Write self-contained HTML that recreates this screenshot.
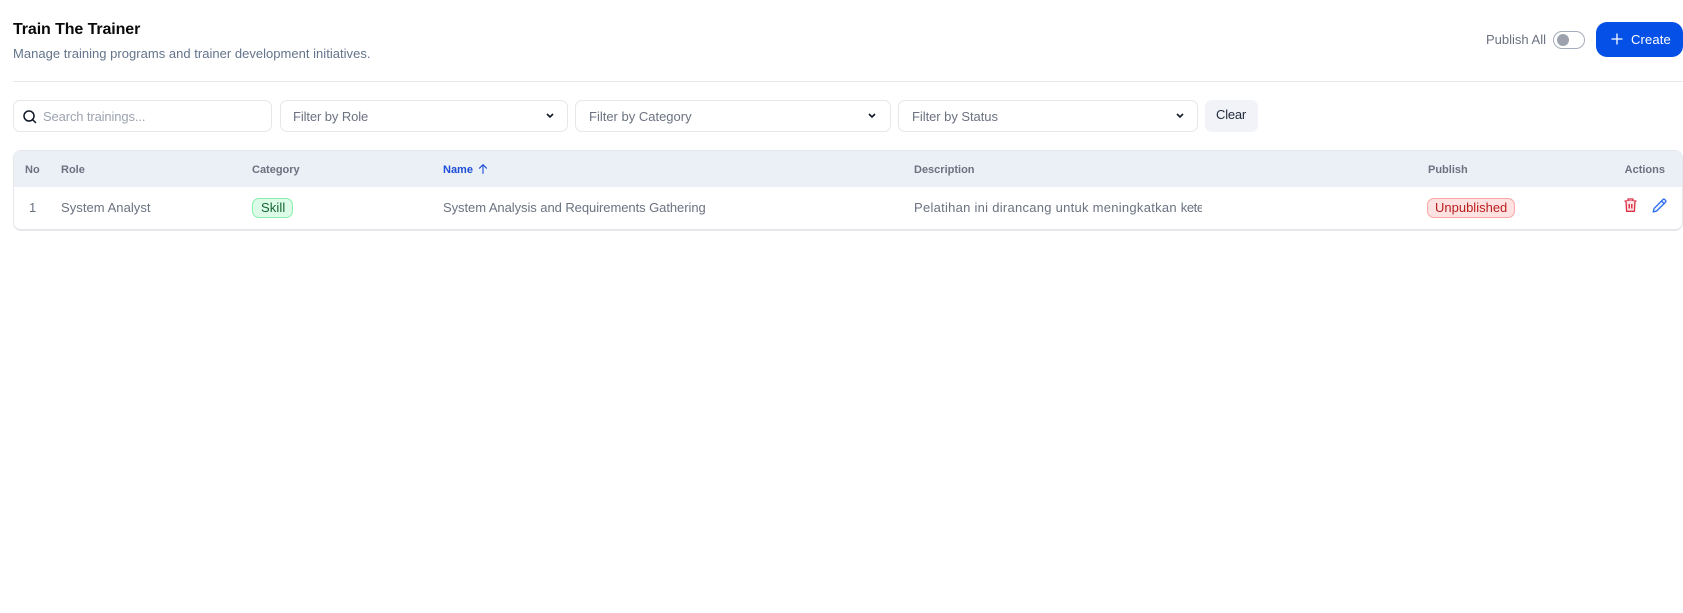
<!DOCTYPE html>
<html>
<head>
<meta charset="utf-8">
<style>
html,body{margin:0;padding:0;background:#fff;width:1683px;height:613px;overflow:hidden;font-family:"Liberation Sans",sans-serif}
.a{position:absolute;white-space:nowrap;line-height:20px}
.box{position:absolute;box-sizing:border-box;background:#fff;border:1px solid #e5e7eb;border-radius:7px;height:32px;top:100px}
.ph{font-size:13px;color:#6b7280;letter-spacing:-.05px;top:107px}
.th{font-size:11px;font-weight:bold;color:#6b7280;top:160px;letter-spacing:0}
.td{font-size:13px;color:#6b7280;top:198px;letter-spacing:.05px}
svg{position:absolute;display:block}
</style>
</head>
<body>
<div class="a" style="left:13px;top:20px;font-size:16px;font-weight:bold;color:#0a0a0a;letter-spacing:-.1px">Train The Trainer</div>
<div class="a" style="left:13px;top:44px;font-size:13px;color:#64748b;letter-spacing:.02px">Manage training programs and trainer development initiatives.</div>

<div class="a" style="left:1486px;top:30px;font-size:13px;color:#6b7280;letter-spacing:0">Publish All</div>
<div style="position:absolute;left:1553px;top:31px;width:32px;height:18px;box-sizing:border-box;border:1.5px solid #a6adbd;border-radius:9px;background:#fff"></div>
<div style="position:absolute;left:1557px;top:34px;width:12px;height:12px;border-radius:50%;background:#9ca3af"></div>
<div style="position:absolute;left:1596px;top:22px;width:87px;height:35px;background:#0550e6;border-radius:11px"></div>
<svg style="left:1610px;top:32px" width="14" height="14" viewBox="0 0 14 14" fill="none" stroke="#fff" stroke-width="1.3" stroke-linecap="round"><path d="M7 2v10M2 7h10"/></svg>
<div class="a" style="left:1631px;top:30px;font-size:13px;color:#fff;letter-spacing:.15px">Create</div>

<div style="position:absolute;left:13px;top:81px;width:1670px;height:1px;background:#e5e7eb"></div>

<div class="box" style="left:13px;width:259px"></div>
<svg style="left:23px;top:110px" width="14" height="14" viewBox="0 0 14 14" fill="none" stroke="#111827" stroke-width="1.5" stroke-linecap="round"><circle cx="6" cy="6" r="5"/><path d="M9.800 9.800L12.500 12.500"/></svg>
<div class="a ph" style="left:43px;color:#9ca3af;letter-spacing:-.13px">Search trainings...</div>

<div class="box" style="left:280px;width:288px"></div>
<div class="a ph" style="left:293px;letter-spacing:-.1px">Filter by Role</div>
<svg style="left:545px;top:112px" width="10" height="8" viewBox="0 0 10 8" fill="none" stroke="#111827" stroke-width="1.6"><path d="M2 2l3 3 3-3"/></svg>

<div class="box" style="left:575px;width:316px"></div>
<div class="a ph" style="left:589px;letter-spacing:0">Filter by Category</div>
<svg style="left:867px;top:112px" width="10" height="8" viewBox="0 0 10 8" fill="none" stroke="#111827" stroke-width="1.6"><path d="M2 2l3 3 3-3"/></svg>

<div class="box" style="left:898px;width:300px"></div>
<div class="a ph" style="left:912px">Filter by Status</div>
<svg style="left:1175px;top:112px" width="10" height="8" viewBox="0 0 10 8" fill="none" stroke="#111827" stroke-width="1.6"><path d="M2 2l3 3 3-3"/></svg>

<div style="position:absolute;left:1205px;top:100px;width:53px;height:32px;background:#f1f3f8;border-radius:7px"></div>
<div class="a" style="left:1216px;top:105px;font-size:13px;color:#1e293b;letter-spacing:-.2px">Clear</div>

<div style="position:absolute;left:13px;top:150px;width:1670px;height:81px;box-sizing:border-box;border:1px solid #e5e7eb;border-bottom-width:2px;border-radius:8px;background:#fff;overflow:hidden">
  <div style="height:36px;background:#ebeff6"></div>
</div>

<div class="a th" style="left:25px">No</div>
<div class="a th" style="left:61px">Role</div>
<div class="a th" style="left:252px">Category</div>
<div class="a th" style="left:443px;color:#1d4ed8">Name</div>
<svg style="left:477px;top:163px" width="12" height="12" viewBox="0 0 12 12" fill="none" stroke="#1d4ed8" stroke-width="1.1" stroke-linecap="round" stroke-linejoin="round"><path d="M6 10.500V1.800M2.500 5.200L6 1.700l3.500 3.500"/></svg>
<div class="a th" style="left:914px">Description</div>
<div class="a th" style="left:1428px">Publish</div>
<div class="a th" style="right:18px">Actions</div>

<div class="a td" style="left:29px">1</div>
<div class="a td" style="left:61px">System Analyst</div>
<div style="position:absolute;left:252px;top:198px;width:41px;height:20px;box-sizing:border-box;background:#dcfce7;border:1px solid #86efac;border-radius:7px"></div>
<div class="a td" style="left:261px;color:#166534;letter-spacing:.1px">Skill</div>
<div class="a td" style="left:443px;letter-spacing:-.06px">System Analysis and Requirements Gathering</div>
<div class="a td" style="left:914px;width:288px;overflow:hidden;letter-spacing:.27px">Pelatihan ini dirancang untuk meningkatkan <span style="letter-spacing:-.4px">keterampilan</span></div>
<div style="position:absolute;left:1427px;top:198px;width:88px;height:20px;box-sizing:border-box;background:#fee2e2;border:1px solid #fca5a5;border-radius:7px"></div>
<div class="a td" style="left:1435px;color:#b91c1c;letter-spacing:0">Unpublished</div>

<svg style="left:1624px;top:198px" width="13" height="14" viewBox="0 0 13 14" fill="none" stroke="#dc2f45" stroke-width="1.300" stroke-linejoin="round"><path d="M.5 3h12M4 3V1h5v2"/><path d="M2 3l.6 10.300h7.800L11 3" fill="#fde3e6"/><path d="M5.200 6v4.500M7.800 6v4.500" stroke-width="1.400"/></svg>
<svg style="left:1652px;top:198px" width="15" height="15" viewBox="0 0 15 15" fill="none" stroke="#2b6cf0" stroke-width="1.300" stroke-linecap="round" stroke-linejoin="round"><path d="M1.200 14l.9-3.600L10.800 1.700a1.500 1.500 0 0 1 2.100 0l.5.500a1.500 1.500 0 0 1 0 2.100L4.700 13z" fill="#eaf1fe"/><path d="M9.500 3l2.700 2.700"/></svg>
</body>
</html>
